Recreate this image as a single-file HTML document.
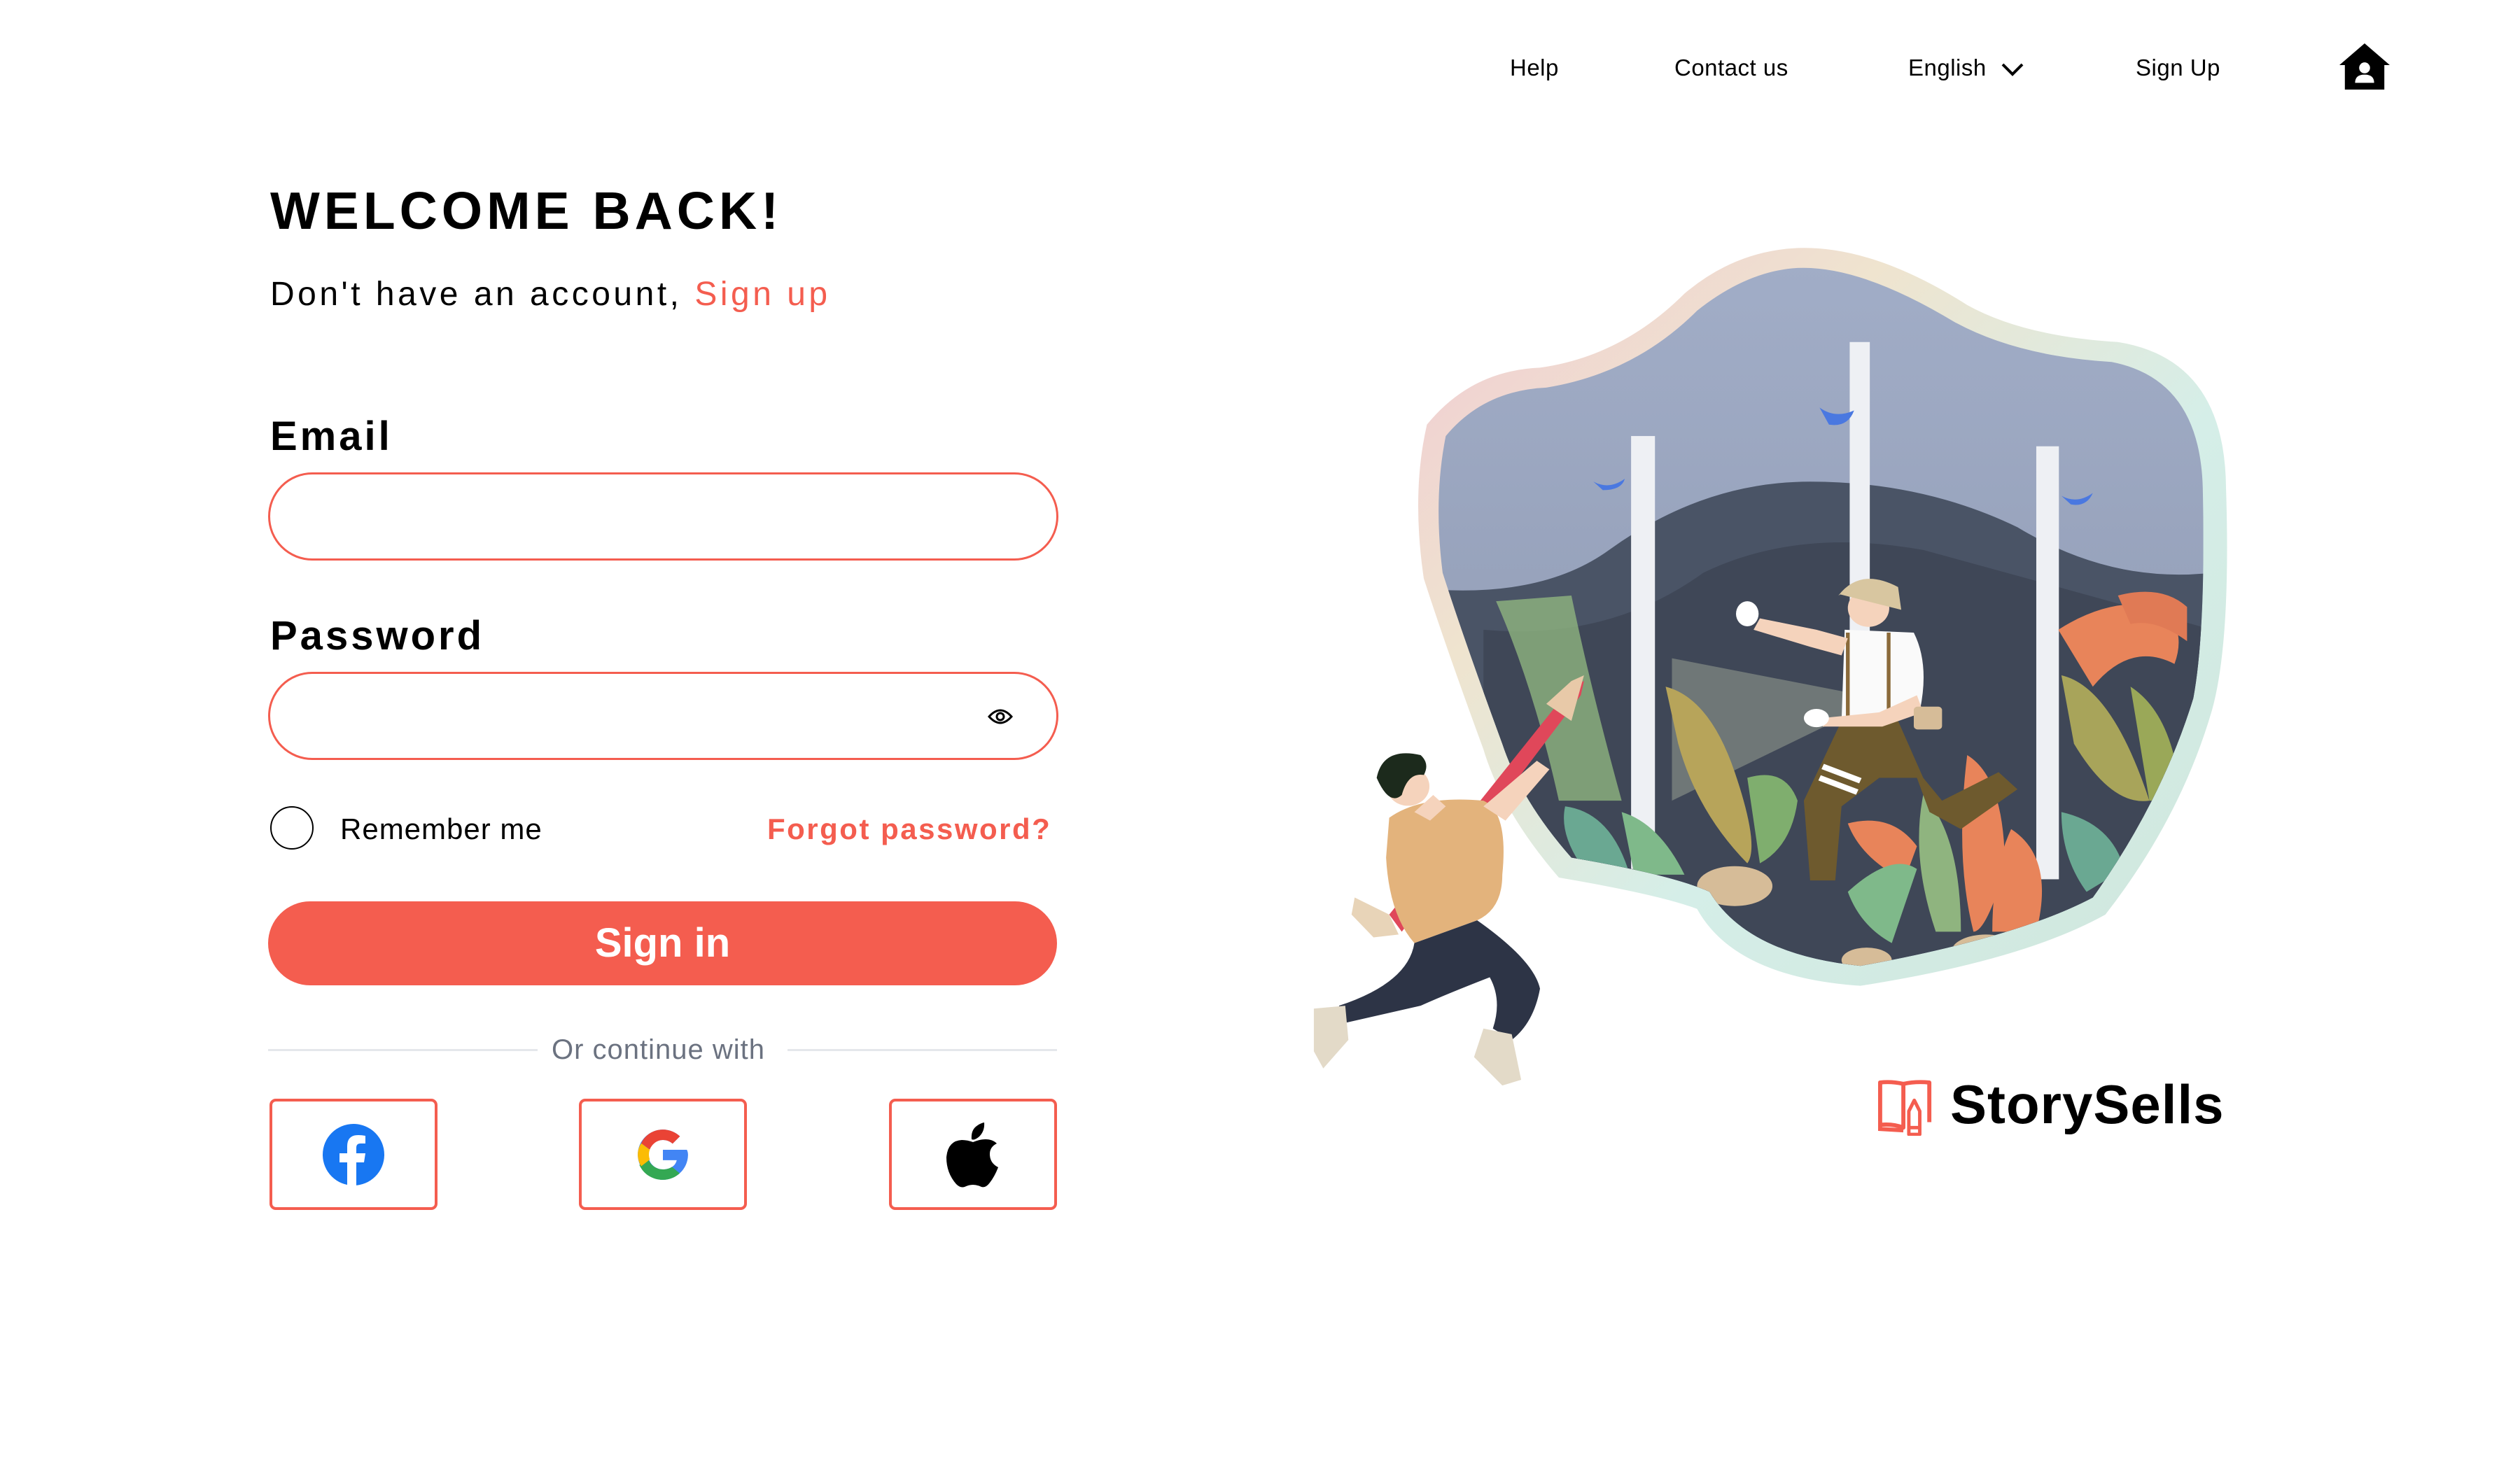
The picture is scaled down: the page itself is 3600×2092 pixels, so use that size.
<!DOCTYPE html>
<html><head><meta charset="utf-8"><style>
*{margin:0;padding:0;box-sizing:border-box}
body{width:3600px;height:2092px;background:#fff;position:relative;overflow:hidden;font-family:"Liberation Sans",Arial,sans-serif;color:#000}
.a{position:absolute;white-space:nowrap}
.nav{font-size:33px;top:78px;letter-spacing:0.5px}
.inp{position:absolute;left:383px;width:1129px;height:126px;border:3px solid #f45d4f;border-radius:63px}
.soc{position:absolute;top:1570px;width:240px;height:159px;border:4px solid #f45d4f;border-radius:9px;display:flex;align-items:center;justify-content:center}
</style></head><body>
<div class="a nav" style="left:2157px">Help</div>
<div class="a nav" style="left:2392px">Contact us</div>
<div class="a nav" style="left:2726px">English</div>
<svg class="a" style="left:2858px;top:88px" width="34" height="22" viewBox="0 0 34 22"><path d="M3 4 L17 18 L31 4" fill="none" stroke="#000" stroke-width="4"/></svg>
<div class="a nav" style="left:3051px">Sign Up</div>
<svg class="a" style="left:3340px;top:60px" width="76" height="70" viewBox="0 0 78 72"><path d="M39 2 L76 34 L68 34 L68 70 L10 70 L10 34 L2 34 Z" fill="#000"/><circle cx="39" cy="38" r="8" fill="#fff"/><path d="M25 60 Q25 48 39 48 Q53 48 53 60 Z" fill="#fff"/></svg>

<div class="a" style="left:386px;top:258px;font-size:75px;font-weight:bold;letter-spacing:6px">WELCOME BACK!</div>
<div class="a" style="left:386px;top:393px;font-size:48px;letter-spacing:4.5px">Don't have an account, <span style="color:#f45d4f">Sign up</span></div>
<div class="a" style="left:386px;top:590px;font-size:58px;font-weight:bold;letter-spacing:4px">Email</div>
<div class="inp" style="top:675px"></div>
<div class="a" style="left:386px;top:875px;font-size:58px;font-weight:bold;letter-spacing:4px">Password</div>
<div class="inp" style="top:960px"></div>
<svg class="a" style="left:1411px;top:1010px" width="36" height="28" viewBox="0 0 36 28"><path d="M2 14 Q18 -4 34 14 Q18 32 2 14 Z" fill="none" stroke="#000" stroke-width="3"/><circle cx="18" cy="14" r="5" fill="none" stroke="#000" stroke-width="3"/></svg>

<div class="a" style="left:386px;top:1152px;width:62px;height:62px;border:2.5px solid #000;border-radius:50%"></div>
<div class="a" style="left:486px;top:1161px;font-size:42px;letter-spacing:1px">Remember me</div>
<div class="a" style="left:1096px;top:1161px;font-size:42px;font-weight:bold;color:#f45d4f;letter-spacing:2.5px">Forgot password?</div>

<div class="a" style="left:383px;top:1288px;width:1127px;height:120px;background:#f45d4f;border-radius:60px;color:#fff;font-size:58px;font-weight:bold;text-align:center;line-height:120px">Sign in</div>

<div class="a" style="left:383px;top:1499px;width:385px;height:3px;background:#e5e7eb"></div>
<div class="a" style="left:1125px;top:1499px;width:385px;height:3px;background:#e5e7eb"></div>
<div class="a" style="left:788px;top:1478px;font-size:40px;color:#6b7280;letter-spacing:1px">Or continue with</div>

<div class="soc" style="left:385px"><svg width="90" height="90" viewBox="0 0 90 90"><circle cx="45" cy="45" r="44" fill="#1877f2"/><path d="M49 90 V56 H60 L62 43 H49 V35 Q49 29 55 29 H62 V18 Q57 17 52 17 Q36 17 36 33 V43 H25 V56 H36 V90 Z" fill="#fff"/></svg></div>
<div class="soc" style="left:827px"><svg width="84" height="84" viewBox="0 0 48 48"><path d="M43.6 20H24v8.5h11.3C34.2 33.4 29.7 36 24 36c-6.6 0-12-5.4-12-12s5.4-12 12-12c3 0 5.8 1.1 7.9 3l6-6C34.3 5.7 29.4 3.5 24 3.5 12.7 3.5 3.5 12.7 3.5 24S12.7 44.5 24 44.5 44.5 35.3 44.5 24c0-1.4-.3-2.7-.9-4z" fill="#4285f4"/><path d="M6.3 14.7l7 5.1C15.1 15.3 19.2 12 24 12c3 0 5.8 1.1 7.9 3l6-6C34.3 5.7 29.4 3.5 24 3.5 16.1 3.5 9.3 8 6.3 14.7z" fill="#ea4335"/><path d="M24 44.5c5.3 0 10.1-2 13.7-5.300l-6.3-5.3c-2 1.4-4.5 2.1-7.4 2.1-5.7 0-10.5-3.8-12.2-9l-7 5.4C8.2 39.9 15.5 44.5 24 44.5z" fill="#34a853"/><path d="M6.3 14.7C4.5 17.4 3.5 20.6 3.5 24s1 6.7 2.8 9.4l7-5.4c-.4-1.3-.7-2.600-.7-4s.2-2.8.7-4.1z" fill="#fbbc05"/></svg></div>
<div class="soc" style="left:1270px"><svg width="84" height="96" viewBox="0 0 84 96"><path d="M58 2 Q59 14 51 22 Q44 28 40 26 Q39 14 46 8 Q52 3 58 2 Z" fill="#000"/><path d="M42 30 Q34 27 26 27 Q6 28 4 52 Q4 74 18 90 Q24 96 30 94 Q36 91 42 91 Q48 91 54 94 Q60 96 66 88 Q73 79 78 66 Q66 60 66 47 Q66 37 76 32 Q70 26 60 26 Q52 26 42 30 Z" fill="#000"/></svg></div>

<svg class="a" style="left:1850px;top:330px" width="1400" height="1270" viewBox="0 0 1560 1560" preserveAspectRatio="none">
<defs>
<linearGradient id="rim" x1="0" y1="0" x2="1" y2="1"><stop offset="0" stop-color="#f0c9d3"/><stop offset="0.3" stop-color="#efe4cf"/><stop offset="0.6" stop-color="#d5eee8"/><stop offset="1" stop-color="#cfe6dc"/></linearGradient>
<linearGradient id="sky" x1="0" y1="0" x2="0" y2="1"><stop offset="0" stop-color="#a2aec8"/><stop offset="1" stop-color="#8892aa"/></linearGradient>
<clipPath id="in"><path d="M800 65 Q900 60 1050 160 Q1150 220 1300 230 Q1440 260 1445 450 Q1450 700 1430 820 Q1380 1000 1270 1170 Q1150 1240 900 1290 Q720 1270 660 1160 Q600 1130 440 1100 Q360 1000 330 900 Q270 720 235 600 Q220 470 240 360 Q300 280 400 275 Q540 250 640 140 Q720 70 800 65 Z"/></clipPath>
</defs>
<path d="M800 30 Q920 25 1070 130 Q1160 185 1310 195 Q1480 225 1482 450 Q1490 720 1460 840 Q1410 1030 1290 1200 Q1160 1280 900 1325 Q700 1310 640 1190 Q580 1165 420 1135 Q330 1020 300 910 Q240 730 205 610 Q185 460 210 340 Q280 245 390 240 Q520 220 620 110 Q700 35 800 30 Z" fill="url(#rim)"/>
<g clip-path="url(#in)">
<rect x="0" y="0" width="1560" height="1560" fill="url(#sky)"/>
<path d="M230 630 Q400 640 500 560 Q650 440 820 440 Q1000 440 1150 520 Q1300 620 1460 600 L1460 1400 L230 1400 Z" fill="#4a5466"/>
<path d="M300 700 Q500 720 650 600 Q800 520 1000 560 Q1200 620 1460 700 L1460 1400 L300 1400 Z" fill="#3f4757"/>
<path d="M600 750 L880 810 L880 850 L600 1000 Z" fill="#c9d2b5" opacity="0.35"/>
<path d="M320 650 Q380 800 420 1000 L520 1000 Q470 800 440 640 Z" fill="#8fb47f" opacity="0.8"/>
<rect x="535" y="360" width="38" height="760" fill="#eef0f4"/>
<rect x="883" y="195" width="32" height="560" fill="#eef0f4"/>
<rect x="1180" y="378" width="36" height="760" fill="#eef0f4"/>
<path d="M1215 700 Q1300 640 1380 660 Q1420 700 1400 760 Q1330 720 1270 800 Z" fill="#e8845a"/>
<path d="M1310 640 Q1380 620 1420 660 L1420 720 Q1370 680 1330 690 Z" fill="#e07a55"/>
<path d="M1220 780 Q1300 800 1360 1000 Q1300 1010 1240 900 Z" fill="#a8a45a"/>
<path d="M1330 800 Q1400 850 1410 1000 L1360 1000 Z" fill="#9aa858"/>
<path d="M590 800 Q660 820 700 950 Q740 1080 720 1110 Q640 1020 610 900 Z" fill="#b7a45a"/>
<path d="M720 960 Q780 940 800 1000 Q790 1080 740 1110 Z" fill="#7fae6e"/>
<path d="M430 1010 Q500 1020 530 1120 L460 1120 Q420 1060 430 1010 Z" fill="#6aa892"/>
<path d="M520 1020 Q580 1040 620 1130 L540 1130 Z" fill="#7fb98a"/>
<path d="M1070 920 Q1130 960 1130 1120 Q1100 1230 1080 1230 Q1050 1100 1070 920 Z" fill="#e8845a"/>
<path d="M1000 990 Q1060 1060 1060 1230 L1020 1230 Q980 1100 1000 990 Z" fill="#8fb47f"/>
<path d="M1140 1050 Q1210 1100 1180 1230 L1110 1230 Q1110 1120 1140 1050 Z" fill="#e8845a"/>
<path d="M880 1040 Q950 1020 990 1080 L970 1140 Q900 1100 880 1040 Z" fill="#e8845a"/>
<path d="M880 1160 Q950 1090 990 1120 L950 1250 Q900 1220 880 1160 Z" fill="#7fb98a"/>
<path d="M1220 1020 Q1300 1040 1320 1120 L1260 1160 Q1220 1100 1220 1020 Z" fill="#6aa892"/>
<ellipse cx="700" cy="1150" rx="60" ry="35" fill="#d6bc98"/>
<ellipse cx="1100" cy="1265" rx="55" ry="30" fill="#d6bc98"/>
<ellipse cx="910" cy="1280" rx="40" ry="22" fill="#d6bc98"/>
<path d="M870 860 L960 860 L1000 960 L1030 1000 L1120 950 L1150 980 L1060 1050 L1010 1020 L990 960 L930 960 L870 1010 L860 1140 L820 1140 L810 1000 Z" fill="#6e5a2e"/>
<path d="M840 940 L900 965 M835 960 L895 985" stroke="#fff" stroke-width="10"/>
<path d="M875 700 L985 705 Q1010 760 995 840 L870 860 Z" fill="#fafafa"/>
<path d="M880 705 L880 860 M945 705 L945 845" stroke="#8a6a3a" stroke-width="6"/>
<path d="M880 715 L830 700 L740 680 L730 700 L820 730 L870 745 Z" fill="#f5d3bc"/>
<path d="M990 815 L930 845 L840 855 L840 870 L935 870 L1000 845 Z" fill="#f5d3bc"/>
<circle cx="913" cy="662" r="33" fill="#f5d3bc"/>
<path d="M865 640 Q900 590 960 625 L965 665 L868 638 Z" fill="#d8c6a0"/>
<rect x="985" y="835" width="45" height="40" rx="6" fill="#d6bc98"/>
<ellipse cx="720" cy="672" rx="18" ry="22" fill="#fff"/>
<ellipse cx="830" cy="855" rx="20" ry="16" fill="#fff"/>
<path d="M475 440 Q500 455 525 435 Q520 455 490 455 Z" fill="#4a78e0"/>
<path d="M835 310 Q860 330 890 315 Q880 345 850 340 Z" fill="#4a78e0"/>
<path d="M1220 465 Q1245 480 1270 460 Q1260 485 1235 480 Z" fill="#4a78e0"/>
</g>
<path d="M150 1200 L440 800 L460 790 L455 815 L170 1230 Z" fill="#e0475a"/>
<path d="M440 790 L460 780 L440 860 L400 830 Z" fill="#e8c9a8"/>
<path d="M95 1170 L150 1200 L165 1235 L125 1240 L90 1200 Z" fill="#e8d4b8"/>
<path d="M150 1030 Q200 990 300 1000 Q340 1020 330 1130 Q330 1190 290 1210 L190 1250 Q150 1200 145 1100 Z" fill="#e3b37c"/>
<path d="M300 1010 L385 930 L405 945 L335 1035 Z" fill="#f5d3bc"/>
<path d="M190 1020 L220 990 L240 1010 L215 1035 Z" fill="#f5d3bc"/>
<circle cx="180" cy="975" r="34" fill="#f5d3bc"/>
<path d="M130 960 Q140 905 200 920 Q215 935 205 955 Q180 950 170 990 Q150 1010 130 960 Z" fill="#1c2a1c"/>
<path d="M190 1250 L290 1210 Q380 1280 390 1330 Q380 1390 345 1420 L315 1400 Q330 1350 310 1310 Q240 1340 200 1360 L80 1390 L70 1360 Q180 1320 190 1250 Z" fill="#2d3446"/>
<path d="M30 1365 L80 1360 L85 1420 L45 1470 L30 1440 Z" fill="#e3dac8"/>
<path d="M300 1400 L345 1410 L360 1490 L330 1500 L285 1450 Z" fill="#e3dac8"/>
</svg>

<svg class="a" style="left:2682px;top:1543px" width="82" height="80" viewBox="0 0 84 82"><path d="M4 4 Q20 2 38 6 L38 70 Q22 64 4 66 Z M38 6 Q56 2 76 4 L76 62" fill="none" stroke="#f45d4f" stroke-width="6" stroke-linejoin="round"/><path d="M4 66 L4 72 L38 74" fill="none" stroke="#f45d4f" stroke-width="6"/><path d="M46 80 L46 46 L54 30 L62 46 L62 80 Z M46 70 L62 70" fill="none" stroke="#f45d4f" stroke-width="5" stroke-linejoin="round"/></svg>
<div class="a" style="left:2786px;top:1533px;font-size:78px;font-weight:bold;letter-spacing:1px">StorySells</div>
</body></html>
